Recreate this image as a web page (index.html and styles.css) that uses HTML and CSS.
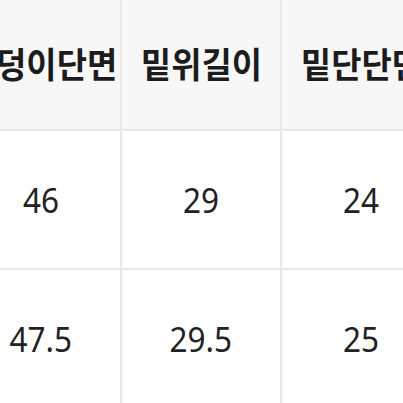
FILE: index.html
```html
<!DOCTYPE html>
<html lang="ko">
<head>
<meta charset="utf-8">
<link rel="stylesheet" href="styles.css">
</head>
<body>
<div class="size-table">
  <div class="cell head"><span class="txt">엉덩이단면</span></div>
  <div class="cell head"><span class="txt">밑위길이</span></div>
  <div class="cell head"><span class="txt">밑단단면</span></div>
  <div class="cell"><span class="txt">46</span></div>
  <div class="cell"><span class="txt">29</span></div>
  <div class="cell"><span class="txt">24</span></div>
  <div class="cell"><span class="txt">47.5</span></div>
  <div class="cell"><span class="txt">29.5</span></div>
  <div class="cell"><span class="txt">25</span></div>
</div>
</body>
</html>
```

FILE: styles.css
```css
html, body {
  margin: 0;
  padding: 0;
  background: #ffffff;
  overflow: hidden;
  width: 403px;
  height: 403px;
}

.size-table {
  display: grid;
  grid-template-columns: repeat(3, 158px);
  grid-auto-rows: 137px;
  gap: 2px;
  background: #e8e8e8;
  width: max-content;
  margin: -8px 0 0 -38px;
}

.cell {
  display: flex;
  align-items: center;
  justify-content: center;
  background: #ffffff;
  font-family: "Noto Sans", "Noto Sans CJK KR", sans-serif;
  font-size: 35px;
  font-weight: 400;
  color: #222222;
  line-height: 1;
  white-space: nowrap;
}

.txt {
  display: inline-block;
  transform: scaleX(0.9);
}

.cell.head {
  background: #f7f7f7;
  font-family: "Noto Sans CJK KR", sans-serif;
  font-weight: 700;
  font-size: 35px;
  color: #1c1c1c;
  padding-top: 3px;
}

.cell.head .txt {
  transform: scaleX(0.94);
}
```
